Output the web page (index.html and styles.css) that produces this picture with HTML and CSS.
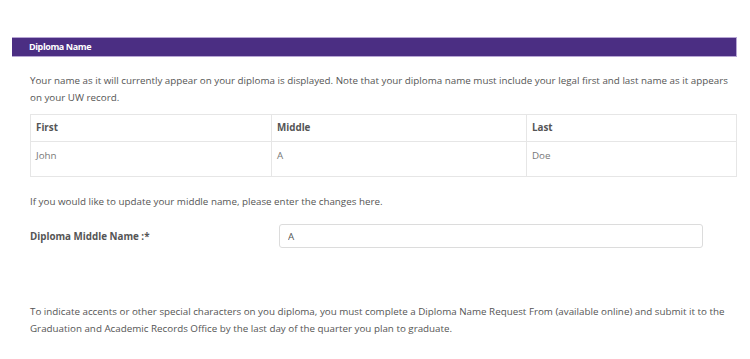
FILE: index.html
```html
<!DOCTYPE html>
<html lang="en">
<head>
  <meta charset="UTF-8" />
  <title>Diploma Name</title>
  <link rel="stylesheet" href="styles.css">
</head>
<body>
  <div class="panel">
    <div class="panel-heading">Diploma Name</div>
    <div class="panel-body">
      <p class="intro">Your name as it will currently appear on your diploma is displayed. Note that your diploma name must include your legal first and last name as it appears on your UW record.</p>

      <table class="name-table">
        <thead>
          <tr>
            <th class="col-first">First</th>
            <th class="col-middle">Middle</th>
            <th class="col-last">Last</th>
          </tr>
        </thead>
        <tbody>
          <tr>
            <td>John</td>
            <td>A</td>
            <td>Doe</td>
          </tr>
        </tbody>
      </table>

      <p class="update-note">If you would like to update your middle name, please enter the changes here.</p>

      <div class="form-row">
        <label class="form-label" for="middle">Diploma Middle Name :*</label>
        <input class="form-input" id="middle" type="text" value="A">
      </div>

      <p class="accents-note">To indicate accents or other special characters on you diploma, you must complete a Diploma Name Request From (available online) and submit it to the Graduation and Academic Records Office by the last day of the quarter you plan to graduate.</p>
    </div>
  </div>
</body>
</html>
```

FILE: styles.css
```css
body {
  margin: 0;
  background: #fff;
  font-family: "Open Sans", "Liberation Sans", sans-serif;
  font-size: 9.8px;
  color: #555;
}

.panel {
  width: 725px;
  margin: 37px 0 0 12px;
}

.panel-heading {
  height: 18px;
  line-height: 18px;
  background: #4b2e83;
  border: 1px solid #b7a6d4;
  border-left: none;
  color: #fff;
  font-weight: 700;
  font-size: 9px;
  padding-left: 17px;
  letter-spacing: -0.4px;
}

.panel-body {
  padding: 0 0 0 18px;
}

.intro {
  margin: 15px 0 0;
  line-height: 17px;
}

.name-table {
  width: 707px;
  margin-top: 8px;
  border-collapse: collapse;
}

.name-table th,
.name-table td {
  border: 1px solid #e6e6e6;
  text-align: left;
  padding: 0 5px;
  vertical-align: top;
}

.name-table th {
  height: 26px;
  line-height: 26px;
  font-weight: 700;
  color: #555;
}

.name-table td {
  height: 34px;
  line-height: 28px;
  color: #777;
}

.col-first { width: 230px; }
.col-middle { width: 244px; }

.update-note {
  margin: 16px 0 0;
  line-height: 17px;
}

.form-row {
  display: flex;
  align-items: center;
  margin-top: 14px;
}

.form-label {
  width: 249px;
  font-weight: 700;
  color: #555;
}

.form-input {
  width: 424px;
  height: 24px;
  box-sizing: border-box;
  border: 1px solid #dcdcdc;
  border-radius: 3px;
  padding: 0 8px;
  font-family: inherit;
  font-size: 9.8px;
  color: #555;
}

.accents-note {
  margin: 55px 0 0;
  line-height: 17px;
}
```
